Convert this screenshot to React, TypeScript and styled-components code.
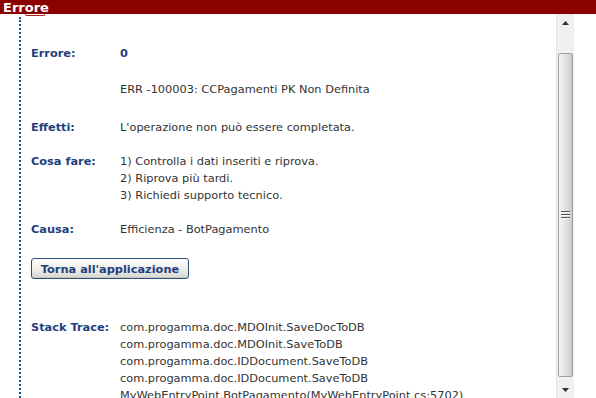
import React from "react";
import styled, { createGlobalStyle } from "styled-components";

const Global = createGlobalStyle`
  html, body { margin: 0; padding: 0; background: #fff; overflow: hidden; }
  body { font-family: "DejaVu Sans", Verdana, sans-serif; }
`;

const Page = styled.div`
  width: 596px;
  height: 398px;
  display: flex;
  flex-direction: column;
  overflow: hidden;
`;

const Header = styled.div`
  height: 14px;
  background: #8b0000;
  color: #fff;
  font-weight: bold;
  font-size: 13px;
  line-height: 15px;
  padding-left: 3px;
  position: relative;
`;

const Tab = styled.div`
  position: absolute;
  left: 25px;
  top: 14px;
  width: 18px;
  height: 1px;
  border: 1px solid #b02020;
  border-top: none;
  border-radius: 0 0 2px 2px;
`;

const Body = styled.div`
  flex: 1;
  display: flex;
  min-height: 0;
`;

const Content = styled.div`
  flex: 1;
  margin-left: 19px;
  margin-top: 3px;
  border-left: 2px dotted #1e4f7a;
  padding: 28px 0 0 10px;
  overflow: hidden;
`;

const Grid = styled.div`
  display: grid;
  grid-template-columns: 89px 1fr;
  font-size: 11.35px;
  line-height: 17px;
  color: #333;
`;

const Label = styled.div<{ $mt?: number }>`
  font-weight: bold;
  color: #1f3f7f;
  margin-top: ${(p) => p.$mt ?? 0}px;
`;

const Value = styled.div<{ $mt?: number; $bold?: boolean }>`
  margin-top: ${(p) => p.$mt ?? 0}px;
  font-weight: ${(p) => (p.$bold ? "bold" : "normal")};
  color: ${(p) => (p.$bold ? "#1f3f7f" : "#333")};
  white-space: nowrap;
`;

const ButtonRow = styled.div`
  grid-column: 1 / 3;
  margin-top: 20px;
`;

const Button = styled.button`
  height: 21px;
  width: 158px;
  padding: 0;
  font-family: "DejaVu Sans", Verdana, sans-serif;
  font-size: 11.35px;
  font-weight: bold;
  color: #1f3f7f;
  border: 1px solid #2c4f7a;
  border-radius: 3px;
  background: linear-gradient(#ffffff, #ebebe6 60%, #d6d6d0);
  box-shadow: inset 0 -1px 0 #c8c8c0;
`;

const Scrollbar = styled.div`
  width: 17px;
  margin-right: 22px;
  background: #f0f0f0;
  border-left: 1px solid #e4e4e4;
  display: flex;
  flex-direction: column;
`;

const Arrow = styled.div`
  height: 17px;
  display: flex;
  align-items: center;
  justify-content: center;
  flex: none;
`;

const Track = styled.div`
  flex: 1;
  padding: 22px 0 4px 0;
  display: flex;
`;

const Thumb = styled.div`
  flex: 1;
  margin: 0 1px;
  border: 1px solid #a0a0a0;
  border-radius: 2px;
  background: linear-gradient(90deg, #f4f4f4, #e6e6e6 40%, #d4d4d4 80%, #c8c8c8);
  display: flex;
  align-items: center;
  justify-content: center;
`;

const Grip = () => (
  <svg width="9" height="8" viewBox="0 0 9 8">
    {[0, 3, 6].map((y) => (
      <g key={y}>
        <rect x="0" y={y} width="9" height="1" fill="#555" />
        <rect x="0" y={y + 1} width="9" height="1" fill="#fff" />
      </g>
    ))}
  </svg>
);

const Tri = ({ up }: { up?: boolean }) => (
  <svg width="7" height="4" viewBox="0 0 7 4">
    <polygon points={up ? "3.5,0 7,4 0,4" : "0,0 7,0 3.5,4"} fill="#333" />
  </svg>
);

export default function App() {
  return (
    <Page>
      <Global />
      <Header>
        Errore
        <Tab />
      </Header>
      <Body>
        <Content>
          <Grid>
            <Label>Errore:</Label>
            <Value $bold>0</Value>
            <div />
            <Value $mt={19}>ERR -100003: CCPagamenti PK Non Definita</Value>
            <Label $mt={21}>Effetti:</Label>
            <Value $mt={21}>L'operazione non può essere completata.</Value>
            <Label $mt={17}>Cosa fare:</Label>
            <Value $mt={17}>
              1) Controlla i dati inseriti e riprova.
              <br />
              2) Riprova più tardi.
              <br />
              3) Richiedi supporto tecnico.
            </Value>
            <Label $mt={17}>Causa:</Label>
            <Value $mt={17}>Efficienza - BotPagamento</Value>
            <ButtonRow>
              <Button>Torna all'applicazione</Button>
            </ButtonRow>
            <Label $mt={40}>Stack Trace:</Label>
            <Value $mt={40}>
              com.progamma.doc.MDOInit.SaveDocToDB
              <br />
              com.progamma.doc.MDOInit.SaveToDB
              <br />
              com.progamma.doc.IDDocument.SaveToDB
              <br />
              com.progamma.doc.IDDocument.SaveToDB
              <br />
              MyWebEntryPoint.BotPagamento(MyWebEntryPoint.cs:5702)
            </Value>
          </Grid>
        </Content>
        <Scrollbar>
          <Arrow>
            <Tri up />
          </Arrow>
          <Track>
            <Thumb>
              <Grip />
            </Thumb>
          </Track>
          <Arrow>
            <Tri />
          </Arrow>
        </Scrollbar>
      </Body>
    </Page>
  );
}
